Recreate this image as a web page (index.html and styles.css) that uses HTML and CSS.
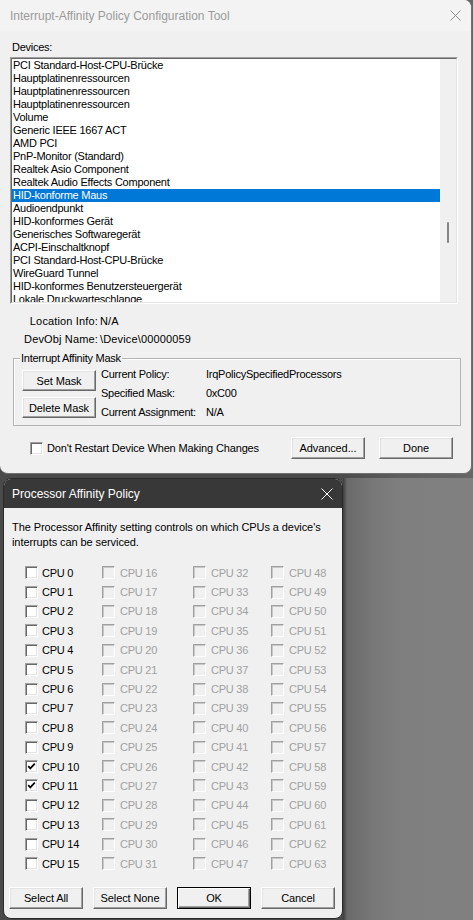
FILE: index.html
```html
<!DOCTYPE html>
<html>
<head>
<meta charset="utf-8">
<link rel="stylesheet" href="styles.css">
</head>
<body>
<div class="screen">
  <div class="win">
    <div class="titlebar">
      <span class="title">Interrupt-Affinity Policy Configuration Tool</span>
      <svg class="close" width="11" height="11" viewBox="0 0 11 11"><path d="M0.5 0.5 L10.5 10.5 M10.5 0.5 L0.5 10.5" stroke="#8c8c8c" stroke-width="1" fill="none"/></svg>
    </div>
    <div class="client">
      <div class="lbl-devices">Devices:</div>
      <div class="listbox">
        <div class="listbox-inner">
          <ul class="items">
            <li>PCI Standard-Host-CPU-Brücke</li>
            <li>Hauptplatinenressourcen</li>
            <li>Hauptplatinenressourcen</li>
            <li>Hauptplatinenressourcen</li>
            <li>Volume</li>
            <li>Generic IEEE 1667 ACT</li>
            <li>AMD PCI</li>
            <li>PnP-Monitor (Standard)</li>
            <li>Realtek Asio Component</li>
            <li>Realtek Audio Effects Component</li>
            <li class="sel">HID-konforme Maus</li>
            <li>Audioendpunkt</li>
            <li>HID-konformes Gerät</li>
            <li>Generisches Softwaregerät</li>
            <li>ACPI-Einschaltknopf</li>
            <li>PCI Standard-Host-CPU-Brücke</li>
            <li>WireGuard Tunnel</li>
            <li>HID-konformes Benutzersteuergerät</li>
            <li>Lokale Druckwarteschlange</li>
          </ul>
          <div class="vscroll"><div class="thumb"></div></div>
        </div>
      </div>
      <div class="info">
        <span class="k">Location Info:</span><span class="v">N/A</span>
        <span class="k">DevObj Name:</span><span class="v">\Device\00000059</span>
      </div>
      <div class="group">
        <span class="legend">Interrupt Affinity Mask</span>
        <div class="btncol">
          <button class="btn btn-sm">Set Mask</button>
          <button class="btn btn-sm">Delete Mask</button>
        </div>
        <div class="props">
          <span>Current Policy:</span><span>IrqPolicySpecifiedProcessors</span>
          <span>Specified Mask:</span><span>0xC00</span>
          <span>Current Assignment:</span><span>N/A</span>
        </div>
      </div>
      <div class="footer">
        <span class="cb"></span><span class="cb-text">Don't Restart Device When Making Changes</span>
        <button class="btn btn-adv">Advanced...</button>
        <button class="btn btn-done">Done</button>
      </div>
    </div>
  </div>
  <div class="lower">
    <div class="dlg">
      <div class="dlg-title">
        <span>Processor Affinity Policy</span>
        <svg width="12" height="12" viewBox="0 0 12 12"><path d="M0.5 0.5 L11.5 11.5 M11.5 0.5 L0.5 11.5" stroke="#ffffff" stroke-width="1" fill="none"/></svg>
      </div>
      <div class="dlg-body">
        <p class="desc">The Processor Affinity setting controls on which CPUs a device's<br>interrupts can be serviced.</p>
        <div class="cpus">
          <div class="cpu"><span class="cb"></span>CPU 0</div>
          <div class="cpu"><span class="cb"></span>CPU 1</div>
          <div class="cpu"><span class="cb"></span>CPU 2</div>
          <div class="cpu"><span class="cb"></span>CPU 3</div>
          <div class="cpu"><span class="cb"></span>CPU 4</div>
          <div class="cpu"><span class="cb"></span>CPU 5</div>
          <div class="cpu"><span class="cb"></span>CPU 6</div>
          <div class="cpu"><span class="cb"></span>CPU 7</div>
          <div class="cpu"><span class="cb"></span>CPU 8</div>
          <div class="cpu"><span class="cb"></span>CPU 9</div>
          <div class="cpu"><span class="cb"><svg width="9" height="9" viewBox="0 0 9 9"><path d="M1.2 4.2 L3.3 6.4 L7.8 1.6" stroke="#000" stroke-width="1.7" fill="none"/></svg></span>CPU 10</div>
          <div class="cpu"><span class="cb"><svg width="9" height="9" viewBox="0 0 9 9"><path d="M1.2 4.2 L3.3 6.4 L7.8 1.6" stroke="#000" stroke-width="1.7" fill="none"/></svg></span>CPU 11</div>
          <div class="cpu"><span class="cb"></span>CPU 12</div>
          <div class="cpu"><span class="cb"></span>CPU 13</div>
          <div class="cpu"><span class="cb"></span>CPU 14</div>
          <div class="cpu"><span class="cb"></span>CPU 15</div>
          <div class="cpu off"><span class="cb"></span>CPU 16</div>
          <div class="cpu off"><span class="cb"></span>CPU 17</div>
          <div class="cpu off"><span class="cb"></span>CPU 18</div>
          <div class="cpu off"><span class="cb"></span>CPU 19</div>
          <div class="cpu off"><span class="cb"></span>CPU 20</div>
          <div class="cpu off"><span class="cb"></span>CPU 21</div>
          <div class="cpu off"><span class="cb"></span>CPU 22</div>
          <div class="cpu off"><span class="cb"></span>CPU 23</div>
          <div class="cpu off"><span class="cb"></span>CPU 24</div>
          <div class="cpu off"><span class="cb"></span>CPU 25</div>
          <div class="cpu off"><span class="cb"></span>CPU 26</div>
          <div class="cpu off"><span class="cb"></span>CPU 27</div>
          <div class="cpu off"><span class="cb"></span>CPU 28</div>
          <div class="cpu off"><span class="cb"></span>CPU 29</div>
          <div class="cpu off"><span class="cb"></span>CPU 30</div>
          <div class="cpu off"><span class="cb"></span>CPU 31</div>
          <div class="cpu off"><span class="cb"></span>CPU 32</div>
          <div class="cpu off"><span class="cb"></span>CPU 33</div>
          <div class="cpu off"><span class="cb"></span>CPU 34</div>
          <div class="cpu off"><span class="cb"></span>CPU 35</div>
          <div class="cpu off"><span class="cb"></span>CPU 36</div>
          <div class="cpu off"><span class="cb"></span>CPU 37</div>
          <div class="cpu off"><span class="cb"></span>CPU 38</div>
          <div class="cpu off"><span class="cb"></span>CPU 39</div>
          <div class="cpu off"><span class="cb"></span>CPU 40</div>
          <div class="cpu off"><span class="cb"></span>CPU 41</div>
          <div class="cpu off"><span class="cb"></span>CPU 42</div>
          <div class="cpu off"><span class="cb"></span>CPU 43</div>
          <div class="cpu off"><span class="cb"></span>CPU 44</div>
          <div class="cpu off"><span class="cb"></span>CPU 45</div>
          <div class="cpu off"><span class="cb"></span>CPU 46</div>
          <div class="cpu off"><span class="cb"></span>CPU 47</div>
          <div class="cpu off"><span class="cb"></span>CPU 48</div>
          <div class="cpu off"><span class="cb"></span>CPU 49</div>
          <div class="cpu off"><span class="cb"></span>CPU 50</div>
          <div class="cpu off"><span class="cb"></span>CPU 51</div>
          <div class="cpu off"><span class="cb"></span>CPU 52</div>
          <div class="cpu off"><span class="cb"></span>CPU 53</div>
          <div class="cpu off"><span class="cb"></span>CPU 54</div>
          <div class="cpu off"><span class="cb"></span>CPU 55</div>
          <div class="cpu off"><span class="cb"></span>CPU 56</div>
          <div class="cpu off"><span class="cb"></span>CPU 57</div>
          <div class="cpu off"><span class="cb"></span>CPU 58</div>
          <div class="cpu off"><span class="cb"></span>CPU 59</div>
          <div class="cpu off"><span class="cb"></span>CPU 60</div>
          <div class="cpu off"><span class="cb"></span>CPU 61</div>
          <div class="cpu off"><span class="cb"></span>CPU 62</div>
          <div class="cpu off"><span class="cb"></span>CPU 63</div>
        </div>
        <div class="dlg-buttons">
          <button class="btn btn-dlg">Select All</button>
          <button class="btn btn-dlg">Select None</button>
          <button class="btn btn-dlg btn-default">OK</button>
          <button class="btn btn-dlg">Cancel</button>
        </div>
      </div>
    </div>
    <div class="desk"></div>
  </div>
</div>
</body>
</html>
```
FILE: styles.css
```css
* { box-sizing: border-box; }
html, body { margin: 0; padding: 0; }
body {
  width: 473px;
  height: 920px;
  overflow: hidden;
  background: #4a4a4a;
  font-family: "Liberation Sans", Arial, sans-serif;
  font-size: 11px;
  letter-spacing: -0.25px;
  color: #000;
}
.screen {
  width: 473px;
  height: 920px;
  background: linear-gradient(90deg, #4a4a4a 0, #4a4a4a 340px, #5e5e5e 400px, #666 473px);
}

/* ---------- main window ---------- */
.win {
  width: 472px;
  height: 474px;
  background: #f0f0f0;
  border-right: 1px solid #707070;
  border-bottom: 1px solid #707070;
  border-radius: 0 8px 8px 8px;
  overflow: hidden;
}
.titlebar {
  height: 31px;
  background: #f3f3f3;
  display: flex;
  align-items: center;
  justify-content: space-between;
  padding: 0 10px 0 10px;
}
.title {
  font-size: 12px;
  letter-spacing: 0;
  color: #9b9b9b;
}
.client {
  padding-left: 10px;
}
.lbl-devices {
  height: 13px;
  line-height: 13px;
  margin: 10px 0 3px 2px;
}
.listbox {
  width: 448px;
  height: 247px;
  border: 1px solid;
  border-color: #a0a0a0 #ffffff #ffffff #a0a0a0;
}
.listbox-inner {
  height: 100%;
  border: 1px solid;
  border-color: #696969 #e3e3e3 #e3e3e3 #696969;
  display: flex;
  background: #fff;
}
.items {
  list-style: none;
  margin: 0;
  padding: 0;
  width: 428px;
  overflow: hidden;
}
.items li {
  height: 13px;
  line-height: 13px;
  padding-left: 1px;
  white-space: nowrap;
}
.items li.sel {
  background: #0078d7;
  color: #fff;
}
.vscroll {
  width: 16px;
  background: #f0f0f0;
  position: relative;
}
.thumb {
  position: absolute;
  left: 7px;
  top: 163px;
  width: 2px;
  height: 21px;
  background: #858585;
  border-radius: 1px;
}
.info {
  display: grid;
  grid-template-columns: 88px auto;
  column-gap: 2px;
  grid-auto-rows: 18px;
  line-height: 18px;
  margin-top: 8px;
  letter-spacing: 0.15px;
}
.info .k { text-align: right; }

.group {
  position: relative;
  margin: 10px 0 0 3px;
  width: 448px;
  height: 68px;
  border: 1px solid #b4b4b4;
  box-shadow: inset 1px 1px 0 #ffffff;
  display: flex;
  padding: 11px 0 0 8px;
}
.legend {
  position: absolute;
  left: 6px;
  top: -7px;
  background: #f0f0f0;
  padding: 0 1px 0 1px;
  line-height: 13px;
}
.btncol {
  display: flex;
  flex-direction: column;
  gap: 6px;
}
.props {
  display: grid;
  grid-template-columns: 105px auto;
  grid-auto-rows: 19px;
  line-height: 19px;
  margin: -5px 0 0 5px;
}

.btn {
  font-family: "Liberation Sans", Arial, sans-serif;
  font-size: 11px;
  letter-spacing: -0.1px;
  color: #000;
  background: #f0f0f0;
  border: 1px solid;
  border-color: #ffffff #696969 #696969 #ffffff;
  box-shadow: inset -1px -1px 0 #a0a0a0, inset 1px 1px 0 #e3e3e3;
  padding: 0;
  margin: 0;
  display: flex;
  align-items: center;
  justify-content: center;
}
.btn-sm { width: 74px; height: 21px; }
.btn-adv, .btn-done { width: 74px; height: 22px; }

.footer {
  margin-top: 11px;
  height: 22px;
  display: flex;
  align-items: center;
  padding: 0 18px 0 20px;
}
.cb {
  width: 13px;
  height: 13px;
  flex: none;
  background: #fff;
  border: 1px solid;
  border-color: #a0a0a0 #ffffff #ffffff #a0a0a0;
  box-shadow: inset 1px 1px 0 #696969, inset -1px -1px 0 #e3e3e3;
  display: flex;
  align-items: center;
  justify-content: center;
}
.cb-text { margin-left: 4px; letter-spacing: -0.15px; }
.btn-adv { margin-left: auto; }
.btn-done { margin-left: 14px; }

/* ---------- lower area ---------- */
.lower {
  margin-top: 4px;
  height: 442px;
  display: flex;
}
.dlg {
  margin-left: 3px;
  width: 340px;
  height: 441px;
  background: #f0f0f0;
  border: 1px solid #2a2a2a;
  border-radius: 8px;
  overflow: hidden;
  flex: none;
}
.dlg-title {
  height: 29px;
  background: #383838;
  color: #ffffff;
  font-size: 12px;
  letter-spacing: 0;
  display: flex;
  align-items: center;
  justify-content: space-between;
  padding: 0 9px 0 8px;
}
.dlg-body {
  padding: 12px 0 0 0;
}
.desc {
  margin: 0 0 0 8px;
  line-height: 15px;
  white-space: nowrap;
  letter-spacing: -0.08px;
}
.cpus {
  margin-top: 13px;
  padding-left: 21px;
  display: grid;
  grid-template-columns: 77px 91px 78px 70px;
  grid-template-rows: repeat(16, 19.4px);
  grid-auto-flow: column;
}
.cpu {
  display: flex;
  align-items: center;
  white-space: nowrap;
}
.cpu .cb { margin-right: 4px; }
.cpu.off { color: #a0a0a0; }
.cpu.off .cb {
  background: #f0f0f0;
  border-color: #a0a0a0 #ffffff #ffffff #a0a0a0;
  box-shadow: inset 1px 1px 0 #c8c8c8;
}
.cpu.off .cb { margin-right: 5px; }
.dlg-buttons {
  margin-top: 14px;
  padding-left: 5px;
  display: flex;
  gap: 10px;
}
.btn-dlg { width: 74px; height: 22px; }
.btn-default {
  border: 1px solid #000;
  box-shadow: inset 1px 1px 0 #ffffff, inset -1px -1px 0 #696969, inset -2px -2px 0 #a0a0a0;
}
.desk {
  flex: 1;
  background: linear-gradient(90deg, #3c3c3c 0, #6a6a6a 4px, #787878 30px, #7f7f7f 60px, #808080 100%);
}
```
